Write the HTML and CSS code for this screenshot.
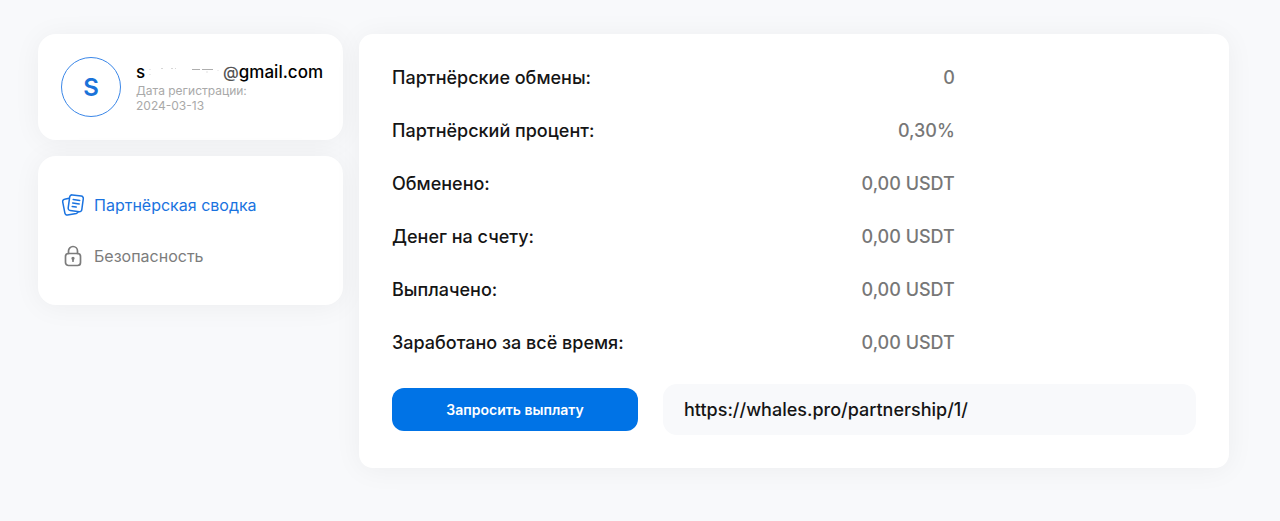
FILE: index.html
```html
<!DOCTYPE html>
<html lang="ru">
<head>
    <meta charset="UTF-8">
    <meta name="viewport" content="width=device-width, initial-scale=1.0">
    <title>Партнёрская сводка</title>
    <link rel="stylesheet" href="styles.css">
</head>
<body>
    <div class="page">
        <aside class="sidebar">
            <div class="card user">
                <div class="avatar">S</div>
                <div class="user-info">
                    <div class="email">
                        <span>s</span>
                        <svg class="email-mask" viewBox="0 0 74 16" fill="none" stroke="#9a9a9a">
                            <path d="M3 5v1M3 10v1M14 4.500h2M24 4.500h2M28 4.500h1" opacity=".4"/>
                            <path d="M45 5.500h8M55 5.500h11" opacity=".8"/>
                            <path d="M60 7v2M71 6v1" opacity=".3"/>
                        </svg>
                        <span><span class="at">@</span>gmail.com</span>
                    </div>
                    <div class="date">Дата регистрации:<br>2024-03-13</div>
                </div>
            </div>
            <nav class="card menu">
                <a class="menu-link active" href="#">
                    <svg class="icon" viewBox="0 0 24 24" fill="none" stroke="currentColor" stroke-width="1.500" stroke-linecap="round" stroke-linejoin="round">
                        <path d="M11.300 1.900l9 1.200a2.300 2.300 0 0 1 2 2.600l-1.500 11a2.300 2.300 0 0 1-2.600 2l-9-1.200a2.300 2.300 0 0 1-2-2.600l1.500-11a2.300 2.300 0 0 1 2.600-2z"/>
                        <path d="M8.200 5.300l-4.700 1a2.200 2.200 0 0 0-1.800 2.600l2.200 11.300a2.200 2.200 0 0 0 2.600 1.800l8.800-1.600a3 3 0 0 0 2-1.700"/>
                        <path d="M12.200 6.500l6.500.9M11.700 10l6.500.9M11.200 13.500l4 .6"/>
                    </svg>
                    Партнёрская сводка
                </a>
                <a class="menu-link" href="#">
                    <svg class="icon" viewBox="0 0 24 24" fill="none" stroke="currentColor" stroke-width="1.700" stroke-linecap="round" stroke-linejoin="round">
                        <rect x="4.500" y="9.500" width="15" height="12" rx="3"/>
                        <path d="M7.500 9.500V7a4.500 4.500 0 0 1 9 0v2.500M12 14.500v2.700"/>
                        <circle cx="12" cy="14.300" r=".8" fill="currentColor"/>
                    </svg>
                    Безопасность
                </a>
            </nav>
        </aside>
        <main class="card content">
            <dl class="stats">
                <div class="stat"><dt>Партнёрские обмены:</dt><dd>0</dd></div>
                <div class="stat"><dt>Партнёрский процент:</dt><dd>0,30%</dd></div>
                <div class="stat"><dt>Обменено:</dt><dd>0,00 USDT</dd></div>
                <div class="stat"><dt>Денег на счету:</dt><dd>0,00 USDT</dd></div>
                <div class="stat"><dt>Выплачено:</dt><dd>0,00 USDT</dd></div>
                <div class="stat"><dt>Заработано за всё время:</dt><dd>0,00 USDT</dd></div>
            </dl>
            <div class="actions">
                <button class="btn" type="button">Запросить выплату</button>
                <input class="link-field" type="text" aria-label="Партнёрская ссылка" value="https://whales.pro/partnership/1/" readonly>
            </div>
        </main>
    </div>
</body>
</html>
```
FILE: styles.css
```css
* {
    box-sizing: border-box;
}
body {
    margin: 0;
    background: #f8f9fb;
    color: #151515;
    font-family: Inter, "Open Sans", sans-serif;
    font-size: 18px;
    font-weight: 500;
}
.page {
    display: grid;
    grid-template-columns: 305px 1fr;
    gap: 16px;
    align-items: start;
    padding: 34px 51px 52px 38px;
}
.sidebar {
    display: grid;
    gap: 16px;
}
.card {
    background: #fff;
    border-radius: 18px;
    box-shadow: 0 2px 28px rgba(0, 0, 0, 0.05);
}
.user {
    display: flex;
    align-items: center;
    gap: 15px;
    padding: 23px 20px 23px 23px;
}
.avatar {
    flex: none;
    display: flex;
    align-items: center;
    justify-content: center;
    width: 60px;
    height: 60px;
    border: 1px solid #3b87e8;
    border-radius: 50%;
    color: #1a73d9;
    font-size: 24px;
    font-weight: 600;
}
.user-info {
    flex: 1;
}
.email {
    display: flex;
    align-items: center;
    justify-content: space-between;
    font-size: 17px;
    line-height: 22px;
    color: #000;
}
.email-mask {
    width: 74px;
    height: 16px;
}
.at {
    color: #555;
    font-size: 16px;
}
.date {
    color: #a9a9a9;
    font-size: 12px;
    font-weight: 400;
    line-height: 15px;
}
.menu {
    display: grid;
    gap: 27px;
    padding: 37px 23px;
}
.menu-link {
    display: flex;
    align-items: center;
    gap: 9px;
    color: #7c7c7c;
    font-size: 16px;
    font-weight: 400;
    line-height: 24px;
    text-decoration: none;
}
.menu-link.active {
    color: #1a73e0;
}
.icon {
    width: 24px;
    height: 24px;
}
.content {
    padding: 33px;
    border-radius: 14px;
}
.stats {
    display: grid;
    gap: 31px;
    width: 70%;
    margin: 0 0 30px;
}
.stat {
    display: flex;
    justify-content: space-between;
    line-height: 22px;
}
.stat dd {
    margin: 0;
    color: #777;
}
.actions {
    display: flex;
    align-items: center;
    gap: 25px;
}
.btn {
    width: 246px;
    height: 43px;
    border: none;
    border-radius: 12px;
    background: #0073e6;
    color: #fff;
    font: inherit;
    font-size: 14px;
    font-weight: 600;
    cursor: pointer;
}
.link-field {
    flex: 1;
    min-width: 0;
    height: 51px;
    padding: 0 21px;
    border: none;
    border-radius: 14px;
    background: #f8f9fb;
    color: #151515;
    font: inherit;
}
```
